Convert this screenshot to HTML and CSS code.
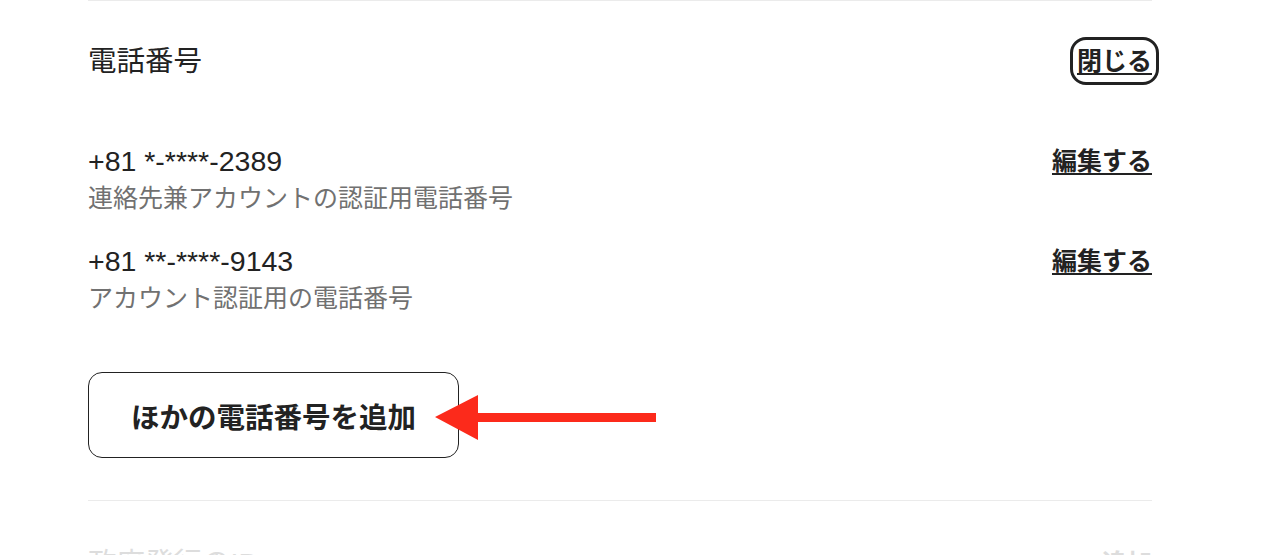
FILE: index.html
```html
<!DOCTYPE html>
<html lang="ja">
  <head>
    <meta charset="utf-8">
    <title>電話番号</title>
    <link rel="stylesheet" href="styles.css">
  </head>
  <body>
    <div class="page">
      <section class="section open">
        <div class="section-head">
          <h2>電話番号</h2>
          <a class="link focus" href="#">閉じる</a>
        </div>

        <div class="phone-list">
          <div class="phone-row">
            <div class="phone-info">
              <div class="phone-number">+81 *-****-2389</div>
              <div class="phone-note">連絡先兼アカウントの認証用電話番号</div>
            </div>
            <a class="link" href="#">編集する</a>
          </div>

          <div class="phone-row">
            <div class="phone-info">
              <div class="phone-number">+81 **-****-9143</div>
              <div class="phone-note">アカウント認証用の電話番号</div>
            </div>
            <a class="link" href="#">編集する</a>
          </div>
        </div>

        <div class="add-row">
          <button class="add-button">ほかの電話番号を追加</button>
          <svg class="arrow" width="222" height="46" viewBox="0 0 222 46">
            <polygon points="0,22 43,0 43,18 221,18 221,27 43,27 43,45" fill="#fc2a1b" />
          </svg>
        </div>
      </section>

      <section class="section disabled">
        <div class="section-head">
          <h2>政府発行のID</h2>
          <a class="link" href="#">追加</a>
        </div>
      </section>
    </div>
  </body>
</html>
```

FILE: styles.css
```css
body {
  margin: 0;
  background: #fff;
  font-family: "Liberation Sans", "Noto Sans CJK JP", sans-serif;
  color: #222;
  overflow: hidden;
}

.page {
  width: 1064px;
  margin-left: 88px;
}

.section {
  border-top: 1px solid #ebebeb;
}

.section.open {
  padding: 36px 0 42px;
}

.section-head {
  display: flex;
  justify-content: space-between;
  align-items: center;
  height: 48px;
}

h2 {
  margin: 0;
  font-size: 28.5px;
  font-weight: 400;
  line-height: 36px;
}

.link {
  color: #222;
  font-size: 25px;
  font-weight: 700;
  line-height: 34px;
  text-decoration: underline;
  text-underline-offset: 3px;
  text-decoration-thickness: 2px;
}

.link.focus {
  outline: 3px solid #222;
  outline-offset: 4px;
  border-radius: 9px;
}

.phone-list {
  display: flex;
  flex-direction: column;
  gap: 27px;
  margin-top: 57px;
}

.phone-row {
  display: flex;
  justify-content: space-between;
  align-items: flex-start;
}

.phone-row .link {
  line-height: 38px;
}

.phone-number {
  font-size: 28.5px;
  line-height: 38px;
}

.phone-note {
  font-size: 25px;
  line-height: 34px;
  color: #717171;
  margin-top: 1px;
}

.add-row {
  position: relative;
  margin-top: 57px;
}

.add-button {
  width: 371px;
  height: 86px;
  border: 1px solid #222;
  border-radius: 14px;
  background: #fff;
  color: #222;
  font-family: inherit;
  font-size: 28.5px;
  font-weight: 700;
  cursor: pointer;
}

.arrow {
  position: absolute;
  left: 347px;
  top: 23px;
}

.section.disabled {
  padding-top: 38px;
}

.section.disabled h2,
.section.disabled .link {
  color: #dddddd;
}
```
